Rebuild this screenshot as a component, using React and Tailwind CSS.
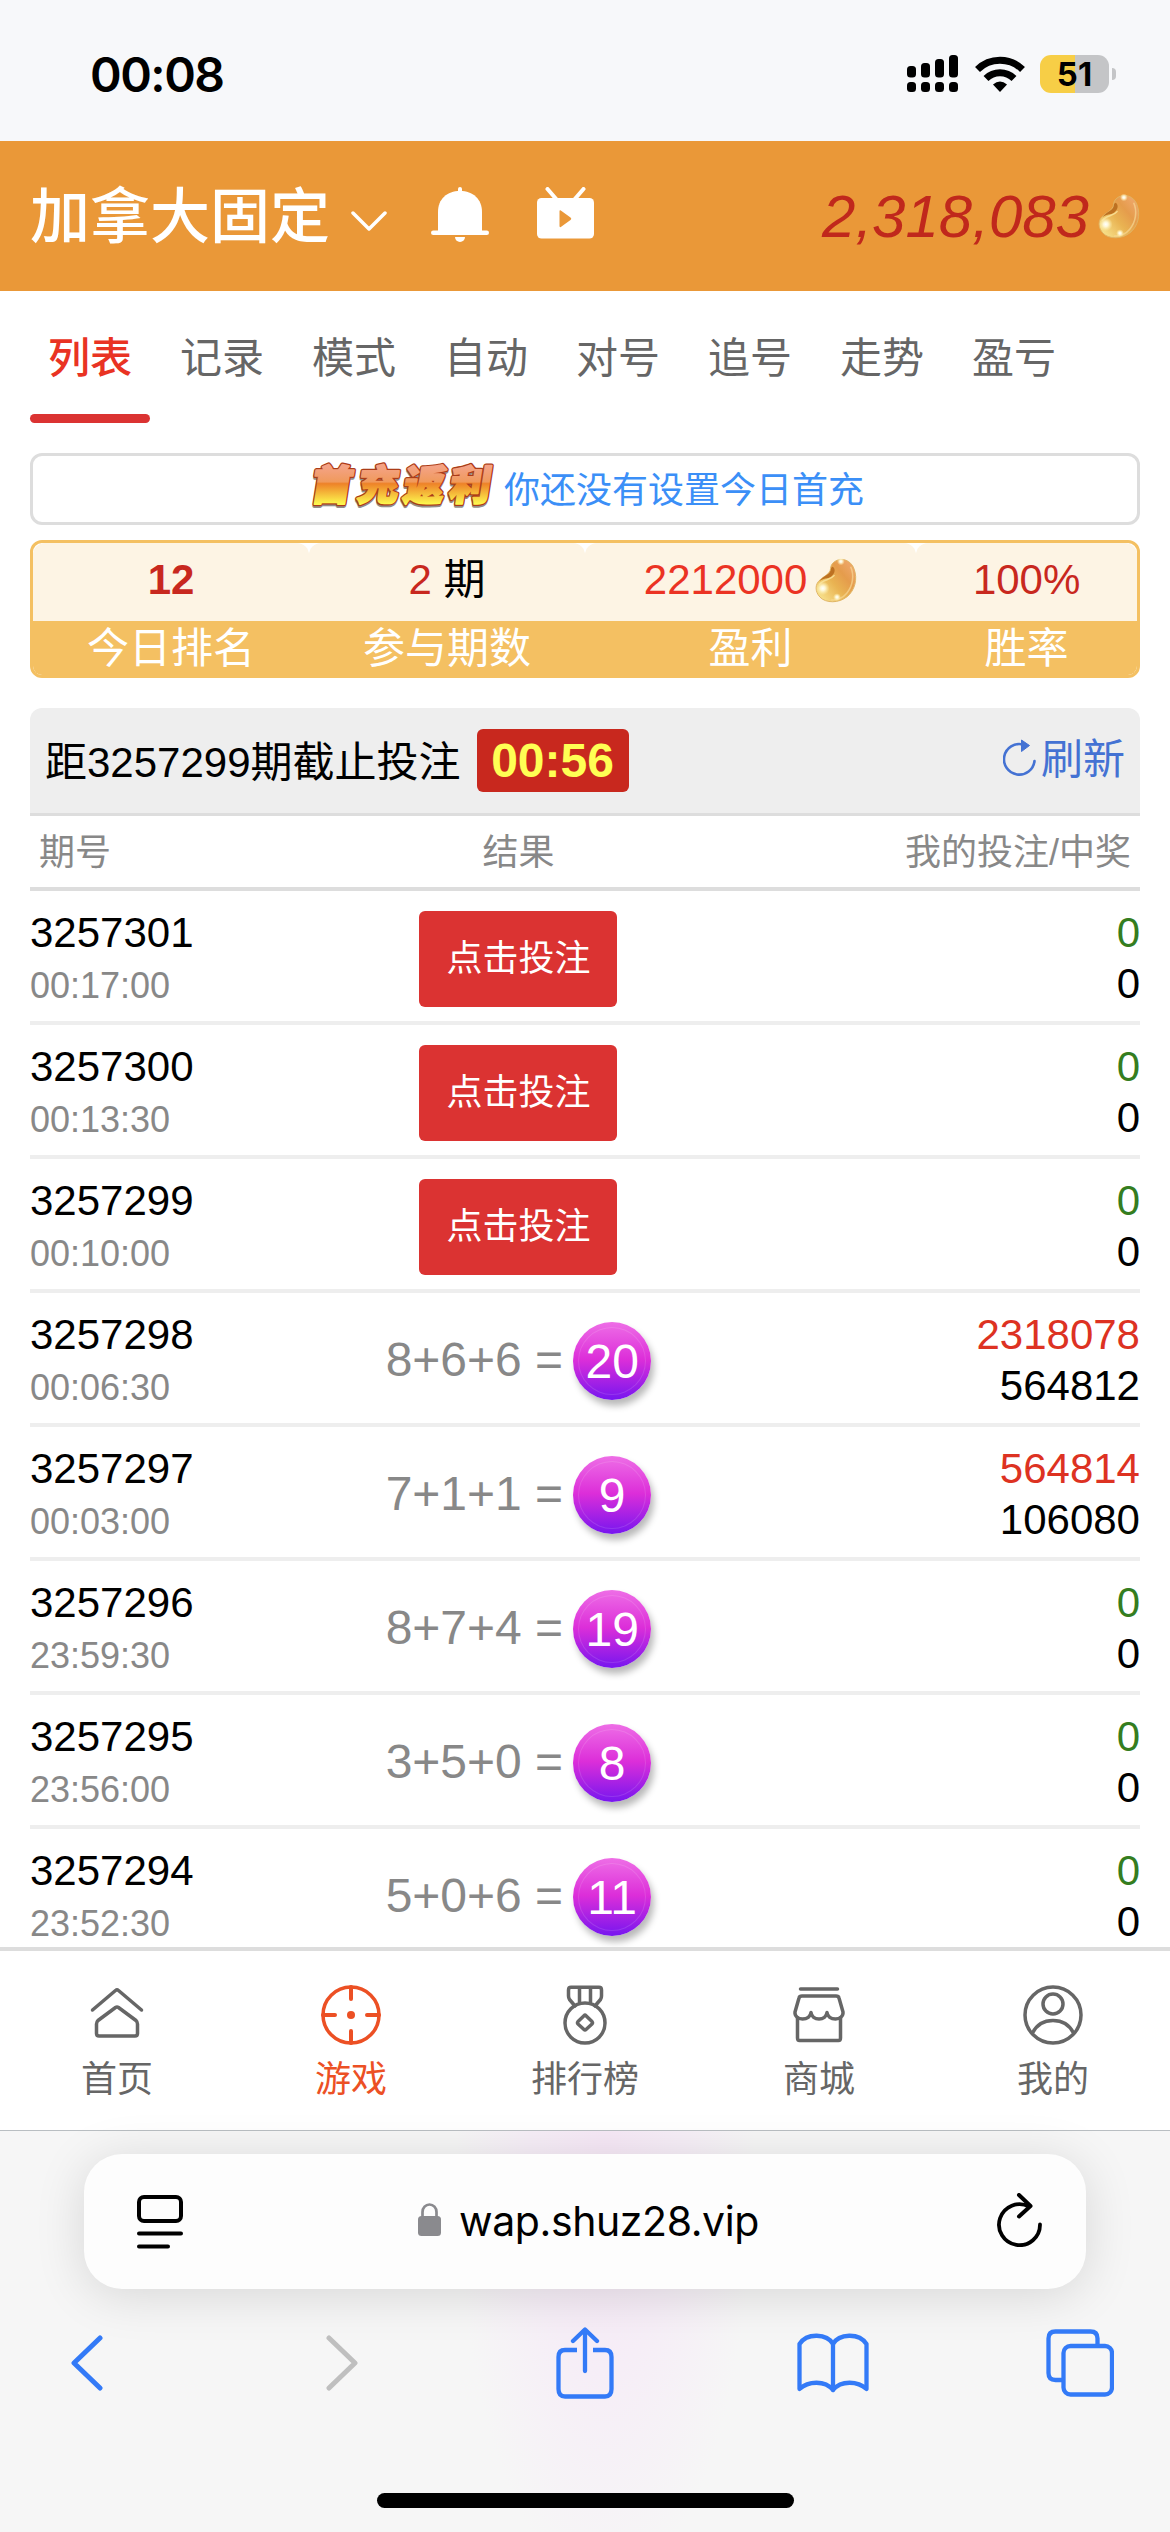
import React from 'react'

const tabs = ['列表', '记录', '模式', '自动', '对号', '追号', '走势', '盈亏']

const rows = [
    { issue: '3257301', time: '00:17:00', win: '0', bet: '0' },
    { issue: '3257300', time: '00:13:30', win: '0', bet: '0' },
    { issue: '3257299', time: '00:10:00', win: '0', bet: '0' },
    { issue: '3257298', time: '00:06:30', formula: '8+6+6', sum: 20, win: '2318078', bet: '564812' },
    { issue: '3257297', time: '00:03:00', formula: '7+1+1', sum: 9, win: '564814', bet: '106080' },
    { issue: '3257296', time: '23:59:30', formula: '8+7+4', sum: 19, win: '0', bet: '0' },
    { issue: '3257295', time: '23:56:00', formula: '3+5+0', sum: 8, win: '0', bet: '0' },
    { issue: '3257294', time: '23:52:30', formula: '5+0+6', sum: 11, win: '0', bet: '0' },
]

function Bean({ id, className }) {
    return (
        <svg viewBox="0 0 42 46" className={className}>
            <defs>
                <linearGradient id={id} x1="0.1" y1="0.9" x2="0.9" y2="0.2">
                    <stop offset="0" stopColor="#f7e08a" />
                    <stop offset="0.45" stopColor="#e9b352" />
                    <stop offset="0.75" stopColor="#e59c4c" />
                    <stop offset="1" stopColor="#eda565" />
                </linearGradient>
                <radialGradient id={id + '-shine'}>
                    <stop offset="0" stopColor="#ffffff" />
                    <stop offset="0.35" stopColor="#fffbe0" stopOpacity="0.9" />
                    <stop offset="1" stopColor="#fff3b0" stopOpacity="0" />
                </radialGradient>
            </defs>
            <path
                d="M18 5C23 0 33 0 38 8C43 17 42 29 35 37C28 45 15 47 7 42C0 37-1 29 3 24C7 19 13 18 15 13C16 10 15 8 18 5Z"
                fill={`url(#${id})`}
                stroke="#dfb465"
                strokeWidth="1"
            />
            <path d="M36 9C40 18 38 29 32 36C28 41 22 43 16 43" fill="none" stroke="#f6d794" strokeWidth="1.6" opacity="0.7" />
            <path d="M4 24C8 18 13 18 15.500 13C16 10.500 16 9.500 17.500 9C21 11 20 16 16 19C12 22 8 20 4 24Z" fill="#bd7122" />
            <path d="M4 27C8 21.500 15 23 19 18" fill="none" stroke="#f7dd92" strokeWidth="1.5" strokeLinecap="round" />
            <circle cx="7.500" cy="31" r="7" fill={`url(#${id}-shine)`} />
            <circle cx="22" cy="40" r="4" fill={`url(#${id}-shine)`} />
            <circle cx="26" cy="3.500" r="4" fill={`url(#${id}-shine)`} />
        </svg>
    )
}

function StatusBar() {
    return (
        <div className="flex h-[141px] items-start justify-between bg-[#f7f8fa] pl-[90px] pr-[54px] pt-[44px] font-['Inter',sans-serif] text-black">
            <span className="text-[48px] font-semibold leading-[61px] tracking-[-1.5px]">00:08</span>
            <div className="flex h-[60px] items-center">
                <svg viewBox="0 0 52 38" className="h-[38px] w-[52px]">
                    <rect x="0" y="11" width="9" height="11.500" rx="3.500" />
                    <rect x="14" y="8" width="9" height="14.500" rx="3.500" />
                    <rect x="28" y="4" width="9" height="18.500" rx="3.500" />
                    <rect x="42" y="0" width="9" height="22.500" rx="3.500" />
                    <rect x="0" y="27" width="9" height="10" rx="3.500" />
                    <rect x="14" y="27" width="9" height="10" rx="3.500" />
                    <rect x="28" y="27" width="9" height="10" rx="3.500" />
                    <rect x="42" y="27" width="9" height="10" rx="3.500" />
                </svg>
                <svg viewBox="0 0 50 37" className="ml-[16px] h-[37px] w-[50px]">
                    <path d="M2.500 13.500A32 32 0 0 1 47.500 13.500" fill="none" stroke="#000" strokeWidth="7" />
                    <path d="M11 22.500A20 20 0 0 1 39 22.500" fill="none" stroke="#000" strokeWidth="7" />
                    <path d="M25 36L18 28.500Q25 22.500 32 28.500Z" />
                </svg>
                <div className="ml-[15px] flex h-[38px] w-[69px] items-center justify-center rounded-[11px] bg-[linear-gradient(90deg,#f7ce46_51%,#c4c5c7_51%)] text-[33px] font-bold leading-none">
                    51
                </div>
                <div className="ml-[3px] h-[12px] w-[4px] rounded-r-full bg-[#c4c5c7]" />
            </div>
        </div>
    )
}

function Header() {
    return (
        <div className="flex h-[150px] items-center bg-[#ea9838] px-[30px]">
            <span className="mt-[4px] text-[60px] font-medium leading-[90px] text-white">加拿大固定</span>
            <svg viewBox="0 0 36 20" className="ml-[21px] mt-[10px] h-[20px] w-[36px]">
                <path d="M2 2L18 18L34 2" fill="none" stroke="#fff" strokeWidth="3.500" strokeLinecap="round" strokeLinejoin="round" />
            </svg>
            <svg viewBox="0 0 58 56" className="ml-[44px] mt-[-2px] h-[56px] w-[58px]" fill="#fff">
                <rect x="27" y="0" width="4" height="8" rx="2" />
                <path d="M7 45V25C7 12 16 4 29 4S51 12 51 25V45Z" />
                <rect x="0" y="43.500" width="58" height="4.500" rx="2.250" />
                <path d="M24 50H34A5 5 0 0 1 24 50Z" />
            </svg>
            <svg viewBox="0 0 57 52" className="ml-[48px] mt-[-6px] h-[52px] w-[57px]">
                <path d="M10.500 2L20 13M46.500 2L37 13" stroke="#fff" strokeWidth="4" strokeLinecap="round" />
                <rect x="0" y="11" width="57" height="40.500" rx="4.500" fill="#fff" />
                <path d="M22.500 24.500V39C22.500 40.500 23.500 40.500 24.500 39.500L33.500 33C34.500 32 34.500 31.500 33.500 30.500L24.500 24C23.500 23 22.500 23 22.500 24.500Z" fill="#ea9838" />
            </svg>
            <span className="ml-auto mt-[2px] text-[60px] italic leading-[90px] text-[#c0281c]">2,318,083</span>
            <Bean id="bean-top" className="ml-[9px] h-[45px] w-[42px]" />
        </div>
    )
}

function Tabs() {
    return (
        <div className="flex h-[162px] gap-[12px] px-[30px]">
            {tabs.map((tab, index) => (
                <div
                    key={tab}
                    className={
                        index === 0
                            ? 'flex h-[132px] w-[120px] flex-col items-center text-[42px] font-medium text-[#e93323]'
                            : 'flex h-[132px] w-[120px] flex-col items-center text-[42px] text-[#666666]'
                    }
                >
                    <span className="mt-[38px] leading-[60px]">{tab}</span>
                    {index === 0 && <div className="mt-auto h-[9px] w-full rounded-full bg-[#db3332]" />}
                </div>
            ))}
        </div>
    )
}

function Banner() {
    return (
        <div className="flex h-[72px] items-center justify-center rounded-[12px] border-[3px] border-[#dddddd] text-[36px] leading-[66px] text-[#3b8ff7]">
            <svg viewBox="0 0 190 58" className="mr-[8px] h-[58px] w-[190px] overflow-visible">
                <defs>
                    <linearGradient id="promo" gradientUnits="userSpaceOnUse" x1="0" y1="7" x2="0" y2="44">
                        <stop offset="0" stopColor="#f4a284" />
                        <stop offset="0.4" stopColor="#f09a5c" />
                        <stop offset="0.45" stopColor="#ee8228" />
                        <stop offset="1" stopColor="#fdf84e" />
                    </linearGradient>
                </defs>
                <g transform="skewX(-9)" fontFamily="'Noto Sans CJK SC', sans-serif" fontWeight="900" fontSize="41" strokeLinejoin="round">
                    <text x="10 56 102 148" y="41.500" fill="#77726e" stroke="#77726e" strokeWidth="4" opacity="0.8">首充返利</text>
                    <text x="10 56 102 148" y="39.500" fill="#ab3c18" stroke="#ab3c18" strokeWidth="4.500">首充返利</text>
                    <text x="10 56 102 148" y="39.500" fill="url(#promo)" stroke="url(#promo)" strokeWidth="2">首充返利</text>
                </g>
            </svg>
            <span className="mt-[3px]">你还没有设置今日首充</span>
        </div>
    )
}

function Stat({ className, label, children }) {
    return (
        <div className={className}>
            <div className="flex h-[78px] items-center justify-center rounded-t-[12px] bg-[#fdf4e4] pb-[4px] text-[#c8281e]">
                {children}
            </div>
            <div className="h-[54px] bg-[#f4c062] text-center leading-[55px] text-white">{label}</div>
        </div>
    )
}

function Stats() {
    return (
        <div className="mt-[15px] flex h-[138px] overflow-hidden rounded-[12px] border-[3px] border-[#f4c062] text-[42px] leading-[60px]">
            <Stat className="w-1/4" label="今日排名"><b>12</b></Stat>
            <Stat className="w-1/4" label="参与期数">
                <span>2 <span className="text-black">期</span></span>
            </Stat>
            <Stat className="w-[30%]" label="盈利">
                <span className="text-[#eb3323]">2212000</span>
                <Bean id="bean-profit" className="ml-[8px] h-[45px] w-[42px]" />
            </Stat>
            <Stat className="w-1/5" label="胜率">100%</Stat>
        </div>
    )
}

function Countdown() {
    return (
        <div className="mt-[30px] flex h-[108px] items-center rounded-t-[12px] border-b-[3px] border-[#dddddd] bg-[#eeeeee] px-[15px] text-[42px] text-black">
            <span className="mt-[4px] leading-[60px]">距3257299期截止投注</span>
            <span className="ml-[16px] h-[63px] w-[152px] rounded-[6px] bg-[#c8281e] text-center text-[48px] font-bold leading-[64px] text-[#ffff54]">00:56</span>
            <div className="-mt-[2px] ml-auto flex items-center text-[#4472d3]">
                <svg viewBox="0 0 34 38" className="mr-[4px] mt-[-3px] h-[38px] w-[34px]">
                    <path d="M31.500 22A15.300 15.300 0 1 1 20 5.500" fill="none" stroke="#4472d3" strokeWidth="2.600" strokeLinecap="round" />
                    <path d="M18.500 1V12.500L26.500 6.500Z" fill="#4472d3" stroke="#4472d3" strokeWidth="1" strokeLinejoin="round" />
                </svg>
                <span className="leading-[60px]">刷新</span>
            </div>
        </div>
    )
}

function Row({ item }) {
    return (
        <div className="flex h-[134px] shrink-0 border-b-[4px] border-[#eeeeee] text-black">
            <div className="w-[24%] pt-[12px]">
                <div className="text-[42px] leading-[60px]">{item.issue}</div>
                <div className="text-[36px] leading-[46px] text-[#888888]">{item.time}</div>
            </div>
            <div className="flex w-[40%] items-center justify-center pt-[6px]">
                {item.formula ? (
                    <>
                        <span className="mb-[3px] text-[48px] leading-[60px] text-[#888888]">{item.formula} =</span>
                        <span className="ml-[10px] size-[78px] rounded-full bg-[linear-gradient(180deg,#ee6ee6_0%,#dc2ed9_48%,#7716ef_100%)] p-[6px] text-center text-[48px] leading-[68px] text-white shadow-[3px_6px_7px_rgba(0,0,0,0.28)]">
                            <span className="block size-[66px] rounded-full shadow-[0_0_0_1px_rgba(255,255,255,0.13)]">{item.sum}</span>
                        </span>
                    </>
                ) : (
                    <button className="h-[96px] w-[198px] rounded-[6px] bg-[#db3332] text-[36px] text-white">点击投注</button>
                )}
            </div>
            <div className="w-[36%] pt-[16px] text-right text-[42px] leading-[51px]">
                <div className={item.win === '0' ? 'text-[#347d20]' : 'text-[#dd3222]'}>{item.win}</div>
                <div>{item.bet}</div>
            </div>
        </div>
    )
}

function NavItem({ label, active, children }) {
    return (
        <div className={active ? 'flex flex-1 flex-col items-center text-[#ec5024]' : 'flex flex-1 flex-col items-center text-[#666666]'}>
            <svg viewBox="0 0 60 60" className="mt-[34px] size-[60px]" fill="none" stroke="currentColor" strokeWidth="3.500" strokeLinecap="round" strokeLinejoin="round">
                {children}
            </svg>
            <span className="mt-[8px] text-[36px] leading-[54px]">{label}</span>
        </div>
    )
}

function BottomNav() {
    return (
        <div className="flex h-[183px] shrink-0 border-t-[4px] border-[#dddddd] bg-white">
            <NavItem label="首页">
                <path d="M5.500 25L28.500 5.500Q30 4.300 31.500 5.500L54.500 25" />
                <path d="M9.500 39Q9.500 37 11 35.500L28.500 22.500Q30 21.500 31.500 22.500L49 35.500Q50.500 37 50.500 39V48.500Q50.500 51 48 51H12Q9.500 51 9.500 48.500Z" />
            </NavItem>
            <NavItem label="游戏" active>
                <circle cx="30" cy="30" r="28" />
                <path d="M30 2V14M30 46V58M2 30H14M46 30H58" strokeWidth="4" />
                <circle cx="30" cy="30" r="4" fill="currentColor" stroke="none" />
            </NavItem>
            <NavItem label="排行榜">
                <circle cx="30" cy="38" r="20" />
                <path d="M20 21L14.500 14.500Q13.500 13 13.500 11V5Q13.500 2.300 16 2.300H44Q46.500 2.300 46.500 5V11Q46.500 13 45.500 14.500L40 21M24.500 3V17M35.500 3V17" />
                <path d="M29 30.700Q30 29.700 31 30.700L37 36.500Q38 37.700 37 39L31 44.500Q30 45.500 29 44.500L23 39Q22 37.700 23 36.500Z" />
            </NavItem>
            <NavItem label="商城">
                <path d="M11.500 4H48.500M8.500 33V53Q8.500 55.500 10.500 55.500H49.500Q51.500 55.500 51.500 53V33" />
                <path d="M13 11H47Q49.500 11 50 13L54 27C54.500 31 51 34 46.500 34C42 34 38.500 31.500 38 27.500C37.500 31.500 34 34 30 34C26 34 22.500 31.500 22 27.500C21.500 31.500 18 34 13.500 34C9 34 5.500 31 6 27L10 13Q10.500 11 13 11Z" />
            </NavItem>
            <NavItem label="我的">
                <circle cx="30" cy="30" r="28" />
                <circle cx="30" cy="19" r="10" />
                <path d="M9.500 48C14 39 22 35.500 30 35.500S46 39 50.500 48" />
            </NavItem>
        </div>
    )
}

function Safari() {
    return (
        <div className="flex h-[402px] shrink-0 flex-col items-center border-t border-[#b9bec2] bg-[#f6f6f6] bg-[radial-gradient(ellipse_150px_440px_at_605px_20px,#f6e8f6_0%,#f6eef7_50%,#f6f6f6_100%)] bg-no-repeat">
            <div className="mt-[23px] flex h-[135px] w-[1002px] items-center rounded-[38px] bg-[#fdfdfd] px-[53px] shadow-[0_6px_50px_rgba(0,0,0,0.13)]">
                <svg viewBox="0 0 46 54" className="h-[54px] w-[46px]" fill="none" stroke="#000" strokeWidth="4" strokeLinecap="round">
                    <rect x="2" y="2" width="42" height="24" rx="5" />
                    <path d="M2 38.500H44M2 51.500H31" />
                </svg>
                <svg viewBox="0 0 23 33" className="ml-[235px] mt-[-4px] h-[33px] w-[23px]">
                    <path d="M4.500 15V9A7 7.500 0 0 1 18.500 9V15" fill="none" stroke="#8a8a8e" strokeWidth="2.700" />
                    <rect x="0" y="13" width="23" height="20" rx="3.500" fill="#8a8a8e" />
                </svg>
                <span className="ml-[18px] mt-[-2px] font-['Inter',sans-serif] text-[41px] leading-[60px] tracking-[-0.4px] text-black">wap.shuz28.vip</span>
                <svg viewBox="0 0 46 54" className="ml-auto mr-[-10px] mt-[-4px] h-[54px] w-[46px]" fill="none" stroke="#000" strokeWidth="4" strokeLinecap="round" strokeLinejoin="round">
                    <path d="M43 31.500A20.500 20.500 0 1 1 32 13.500" strokeWidth="3.800" />
                    <path d="M22 2L33.500 13L22 23.500" />
                </svg>
            </div>
            <div className="mt-[36px] flex h-[76px] w-full items-center pl-[71px] pr-[56px]">
                <svg viewBox="0 0 32 56" className="h-[56px] w-[32px]">
                    <path d="M29 3L3 28L29 53" fill="none" stroke="#337af7" strokeWidth="5" strokeLinecap="round" strokeLinejoin="round" />
                </svg>
                <svg viewBox="0 0 32 56" className="ml-[223px] h-[56px] w-[32px]">
                    <path d="M3 3L29 28L3 53" fill="none" stroke="#bfbfbf" strokeWidth="5" strokeLinecap="round" strokeLinejoin="round" />
                </svg>
                <svg viewBox="0 0 58 72" className="ml-[198px] h-[72px] w-[58px]" fill="none" stroke="#337af7" strokeWidth="4.300" strokeLinecap="round" strokeLinejoin="round">
                    <path d="M21 23H9Q2.500 23 2.500 30V62Q2.500 69.500 9 69.500H49Q55.500 69.500 55.500 62V30Q55.500 23 49 23H37" strokeLinecap="butt" />
                    <path d="M29 44V3M17 14L29 2.500L41 14" />
                </svg>
                <svg viewBox="0 0 72 60" className="ml-[183px] h-[60px] w-[72px]" fill="none" stroke="#337af7" strokeWidth="4.300" strokeLinecap="round" strokeLinejoin="round">
                    <path d="M36 11C30 .5 10 -.5 2.500 11V56C11 48 28 47 36 57C44 47 61 48 69.500 56V11C62 -.5 42 .5 36 11Z" />
                    <path d="M36 11V57" />
                </svg>
                <svg viewBox="0 0 68 68" className="ml-auto h-[68px] w-[68px]" fill="none" stroke="#337af7" strokeWidth="4.300">
                    <path d="M16 51H9.500Q2.500 51 2.500 44V9.500Q2.500 2.500 9.500 2.500H44.500Q51.500 2.500 51.500 9.500V16" />
                    <rect x="17.500" y="17" width="48.500" height="48.500" rx="7" />
                </svg>
            </div>
            <div className="mt-auto mb-[24px] h-[15px] w-[417px] rounded-full bg-black" />
        </div>
    )
}

export default function App() {
    return (
        <div className="flex h-[2532px] w-[1170px] flex-col overflow-hidden bg-white font-['Liberation_Sans','Noto_Sans_CJK_SC',sans-serif]">
            <StatusBar />
            <Header />
            <Tabs />
            {/* La lista se corta por debajo de la barra de navegación */}
            <div className="flex min-h-0 flex-1 flex-col overflow-hidden px-[30px] *:shrink-0">
                <Banner />
                <Stats />
                <Countdown />
                <div className="flex h-[75px] border-b-[4px] border-[#dddddd] text-[36px] leading-[73px] text-[#888888]">
                    <div className="w-[24%] pl-[9px]">期号</div>
                    <div className="w-[40%] text-center">结果</div>
                    <div className="w-[36%] pr-[9px] text-right">我的投注/中奖</div>
                </div>
                {rows.map((item) => (
                    <Row key={item.issue} item={item} />
                ))}
            </div>
            <BottomNav />
            <Safari />
        </div>
    )
}
